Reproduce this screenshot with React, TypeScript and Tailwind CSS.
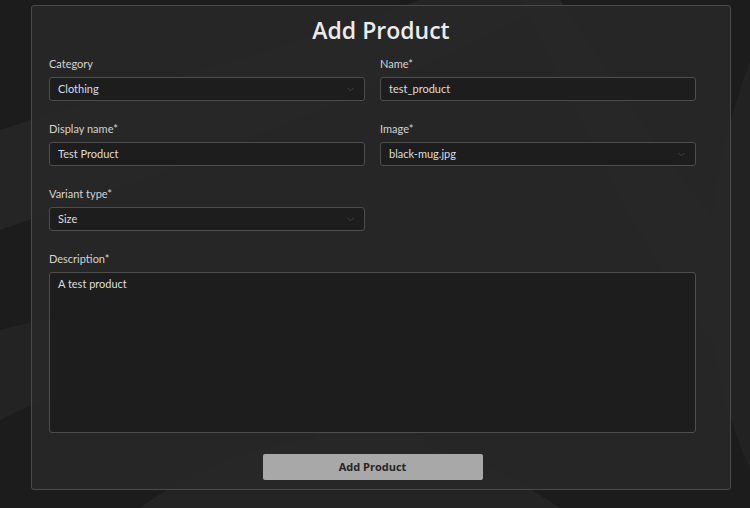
import { ChevronDown } from 'lucide-react'

const labelCls = 'block h-[14px] text-[11px] leading-[14px] text-[#d4d4d4] mb-[6px]'
const boxCls =
  'flex items-center h-[24px] w-full px-[8px] bg-[#1d1d1d] border border-[#4d4d4d] rounded-[3px] text-[11px] text-[#dedede]'

const Backdrop = () => (
  <svg className="absolute inset-0 w-full h-full" viewBox="0 0 750 508" preserveAspectRatio="none">
    <rect width="750" height="508" fill="#1c1c1c" />
    <path d="M0 130 C120 90 260 60 420 0 L560 0 C380 90 200 160 0 230 Z" fill="#252525" />
    <path d="M0 330 C160 290 300 250 470 508 L380 508 C260 340 120 360 0 420 Z" fill="#232323" />
    <path d="M560 0 C640 120 700 220 750 250 L750 380 C660 300 600 150 520 0 Z" fill="#272727" />
    <path d="M140 508 C260 420 420 410 560 508 Z" fill="#242424" />
    <path d="M750 60 C700 200 690 330 750 470 Z" fill="#222222" />
  </svg>
)

const SelectBox = ({ value, tint }: { value: string; tint?: boolean }) => (
  <div className={boxCls + ' justify-between'}>
    <span className={tint ? 'text-[#d6dcec]' : ''}>{value}</span>
    <ChevronDown size={11} strokeWidth={1.5} className="text-[#4f4f4f]" />
  </div>
)

const TextBox = ({ value }: { value: string }) => (
  <div className={boxCls}>
    <span>{value}</span>
  </div>
)

export default function App() {
  return (
    <div
      className="relative w-[750px] h-[508px] overflow-hidden"
      style={{ fontFamily: 'Lato, "Noto Sans", sans-serif' }}
    >
      <Backdrop />
      <div className="relative ml-[31px] mt-[5px] w-[700px] h-[485px] bg-[#282828]/90 border border-[#4a4a4a] rounded-[3px] flex flex-col">
        <h1
          className="h-[51px] pb-[2px] flex items-center justify-center text-[23px] font-semibold text-[#ececec]"
          style={{ fontFamily: '"Open Sans", "Noto Sans", sans-serif' }}
        >
          Add Product
        </h1>
        <div className="pl-[17px] pr-[34px] flex flex-col">
          <div className="grid grid-cols-2 gap-x-[15px] gap-y-[21px]">
            <div>
              <label className={labelCls}>Category</label>
              <SelectBox value="Clothing" tint />
            </div>
            <div>
              <label className={labelCls}>Name*</label>
              <TextBox value="test_product" />
            </div>
            <div>
              <label className={labelCls}>Display name*</label>
              <TextBox value="Test Product" />
            </div>
            <div>
              <label className={labelCls}>Image*</label>
              <SelectBox value="black-mug.jpg" />
            </div>
            <div>
              <label className={labelCls}>Variant type*</label>
              <SelectBox value="Size" />
            </div>
            <div />
          </div>
          <div className="mt-[21px]">
            <label className={labelCls}>Description*</label>
            <div className="h-[161px] w-full px-[8px] py-[3px] bg-[#1d1d1d] border border-[#4d4d4d] rounded-[3px] text-[11px] text-[#dedede]">
              A test product
            </div>
          </div>
          <div className="mt-[21px] flex justify-center">
            <button
              className="w-[220px] h-[26px] bg-[#a8a8a8] rounded-[2px] text-[11px] font-bold text-[#262626]"
              style={{ fontFamily: '"Open Sans", "Noto Sans", sans-serif' }}
            >
              Add Product
            </button>
          </div>
        </div>
      </div>
    </div>
  )
}
